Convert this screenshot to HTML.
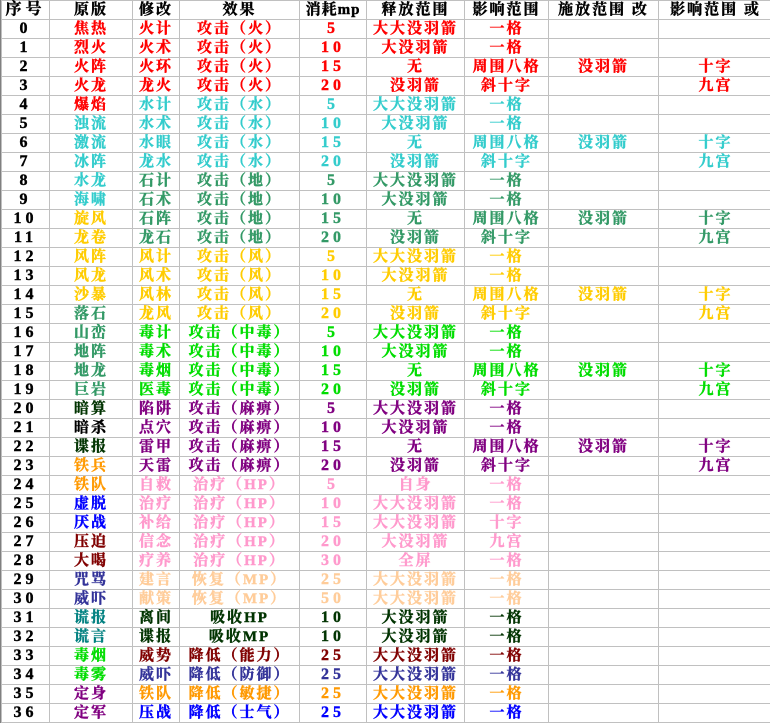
<!DOCTYPE html>
<html><head><meta charset="utf-8"><style>
body{margin:0;background:#fff;width:770px;height:724px;overflow:hidden}
.g{display:grid;grid-template-columns:47px 82px 46px 119px 66px 97px 83px 109px 113px;grid-auto-rows:18px;gap:1px;background:#c0c0c0;padding:1px 0 1px 1px;border-left:1px solid #808080;box-sizing:border-box;width:770px}
.g div{background:#fff;display:flex;align-items:center;justify-content:center;font-family:"Liberation Serif","Noto Serif CJK SC",serif;font-weight:bold;font-size:15px;letter-spacing:2px;white-space:nowrap;line-height:18px;-webkit-text-stroke:0.4px currentColor}
.g div:nth-child(9n+1),.g div:nth-child(9n+5){letter-spacing:4px;font-size:16px}
.k{color:#000}.r{color:#f00}.c{color:#33cccc}.e{color:#339966}.y{color:#ffcc00}.n{color:#00dd00}.p{color:#800080}.i{color:#ff99cc}.h{color:#ffcc99}.d{color:#003300}.m{color:#800000}.s{color:#333399}.o{color:#ff9900}.b{color:#0000ff}.t{color:#008080}
</style></head><body><div class="g">
<div class="k">序号</div><div class="k">原版</div><div class="k">修改</div><div class="k">效果</div><div class="k" style="letter-spacing:1px;font-size:15px">消耗mp</div><div class="k">释放范围</div><div class="k">影响范围</div><div class="k">施放范围 改</div><div class="k">影响范围 或</div>
<div class="k">0</div><div class="r">焦热</div><div class="r">火计</div><div class="r">攻击（火）</div><div class="r">5</div><div class="r">大大没羽箭</div><div class="r">一格</div><div></div><div></div>
<div class="k">1</div><div class="r">烈火</div><div class="r">火术</div><div class="r">攻击（火）</div><div class="r">10</div><div class="r">大没羽箭</div><div class="r">一格</div><div></div><div></div>
<div class="k">2</div><div class="r">火阵</div><div class="r">火环</div><div class="r">攻击（火）</div><div class="r">15</div><div class="r">无</div><div class="r">周围八格</div><div class="r">没羽箭</div><div class="r">十字</div>
<div class="k">3</div><div class="r">火龙</div><div class="r">龙火</div><div class="r">攻击（火）</div><div class="r">20</div><div class="r">没羽箭</div><div class="r">斜十字</div><div></div><div class="r">九宫</div>
<div class="k">4</div><div class="r">爆焰</div><div class="c">水计</div><div class="c">攻击（水）</div><div class="c">5</div><div class="c">大大没羽箭</div><div class="c">一格</div><div></div><div></div>
<div class="k">5</div><div class="c">浊流</div><div class="c">水术</div><div class="c">攻击（水）</div><div class="c">10</div><div class="c">大没羽箭</div><div class="c">一格</div><div></div><div></div>
<div class="k">6</div><div class="c">激流</div><div class="c">水眼</div><div class="c">攻击（水）</div><div class="c">15</div><div class="c">无</div><div class="c">周围八格</div><div class="c">没羽箭</div><div class="c">十字</div>
<div class="k">7</div><div class="c">冰阵</div><div class="c">龙水</div><div class="c">攻击（水）</div><div class="c">20</div><div class="c">没羽箭</div><div class="c">斜十字</div><div></div><div class="c">九宫</div>
<div class="k">8</div><div class="c">水龙</div><div class="e">石计</div><div class="e">攻击（地）</div><div class="e">5</div><div class="e">大大没羽箭</div><div class="e">一格</div><div></div><div></div>
<div class="k">9</div><div class="c">海啸</div><div class="e">石术</div><div class="e">攻击（地）</div><div class="e">10</div><div class="e">大没羽箭</div><div class="e">一格</div><div></div><div></div>
<div class="k">10</div><div class="y">旋风</div><div class="e">石阵</div><div class="e">攻击（地）</div><div class="e">15</div><div class="e">无</div><div class="e">周围八格</div><div class="e">没羽箭</div><div class="e">十字</div>
<div class="k">11</div><div class="y">龙卷</div><div class="e">龙石</div><div class="e">攻击（地）</div><div class="e">20</div><div class="e">没羽箭</div><div class="e">斜十字</div><div></div><div class="e">九宫</div>
<div class="k">12</div><div class="y">风阵</div><div class="y">风计</div><div class="y">攻击（风）</div><div class="y">5</div><div class="y">大大没羽箭</div><div class="y">一格</div><div></div><div></div>
<div class="k">13</div><div class="y">风龙</div><div class="y">风术</div><div class="y">攻击（风）</div><div class="y">10</div><div class="y">大没羽箭</div><div class="y">一格</div><div></div><div></div>
<div class="k">14</div><div class="y">沙暴</div><div class="y">风林</div><div class="y">攻击（风）</div><div class="y">15</div><div class="y">无</div><div class="y">周围八格</div><div class="y">没羽箭</div><div class="y">十字</div>
<div class="k">15</div><div class="e">落石</div><div class="y">龙风</div><div class="y">攻击（风）</div><div class="y">20</div><div class="y">没羽箭</div><div class="y">斜十字</div><div></div><div class="y">九宫</div>
<div class="k">16</div><div class="e">山峦</div><div class="n">毒计</div><div class="n">攻击（中毒）</div><div class="n">5</div><div class="n">大大没羽箭</div><div class="n">一格</div><div></div><div></div>
<div class="k">17</div><div class="e">地阵</div><div class="n">毒术</div><div class="n">攻击（中毒）</div><div class="n">10</div><div class="n">大没羽箭</div><div class="n">一格</div><div></div><div></div>
<div class="k">18</div><div class="e">地龙</div><div class="n">毒烟</div><div class="n">攻击（中毒）</div><div class="n">15</div><div class="n">无</div><div class="n">周围八格</div><div class="n">没羽箭</div><div class="n">十字</div>
<div class="k">19</div><div class="e">巨岩</div><div class="n">医毒</div><div class="n">攻击（中毒）</div><div class="n">20</div><div class="n">没羽箭</div><div class="n">斜十字</div><div></div><div class="n">九宫</div>
<div class="k">20</div><div class="d">暗算</div><div class="p">陷阱</div><div class="p">攻击（麻痹）</div><div class="p">5</div><div class="p">大大没羽箭</div><div class="p">一格</div><div></div><div></div>
<div class="k">21</div><div class="k">暗杀</div><div class="p">点穴</div><div class="p">攻击（麻痹）</div><div class="p">10</div><div class="p">大没羽箭</div><div class="p">一格</div><div></div><div></div>
<div class="k">22</div><div class="d">谍报</div><div class="p">雷甲</div><div class="p">攻击（麻痹）</div><div class="p">15</div><div class="p">无</div><div class="p">周围八格</div><div class="p">没羽箭</div><div class="p">十字</div>
<div class="k">23</div><div class="o">铁兵</div><div class="p">天雷</div><div class="p">攻击（麻痹）</div><div class="p">20</div><div class="p">没羽箭</div><div class="p">斜十字</div><div></div><div class="p">九宫</div>
<div class="k">24</div><div class="o">铁队</div><div class="i">自救</div><div class="i">治疗（HP）</div><div class="i">5</div><div class="i">自身</div><div class="i">一格</div><div></div><div></div>
<div class="k">25</div><div class="b">虚脱</div><div class="i">治疗</div><div class="i">治疗（HP）</div><div class="i">10</div><div class="i">大大没羽箭</div><div class="i">一格</div><div></div><div></div>
<div class="k">26</div><div class="b">厌战</div><div class="i">补给</div><div class="i">治疗（HP）</div><div class="i">15</div><div class="i">大大没羽箭</div><div class="i">十字</div><div></div><div></div>
<div class="k">27</div><div class="m">压迫</div><div class="i">信念</div><div class="i">治疗（HP）</div><div class="i">20</div><div class="i">大没羽箭</div><div class="i">九宫</div><div></div><div></div>
<div class="k">28</div><div class="m">大喝</div><div class="i">疗养</div><div class="i">治疗（HP）</div><div class="i">30</div><div class="i">全屏</div><div class="i">一格</div><div></div><div></div>
<div class="k">29</div><div class="s">咒骂</div><div class="h">建言</div><div class="h">恢复（MP）</div><div class="h">25</div><div class="h">大大没羽箭</div><div class="h">一格</div><div></div><div></div>
<div class="k">30</div><div class="s">威吓</div><div class="h">献策</div><div class="h">恢复（MP）</div><div class="h">50</div><div class="h">大大没羽箭</div><div class="h">一格</div><div></div><div></div>
<div class="k">31</div><div class="t">谎报</div><div class="d">离间</div><div class="d">吸收HP</div><div class="d">10</div><div class="d">大没羽箭</div><div class="d">一格</div><div></div><div></div>
<div class="k">32</div><div class="t">谎言</div><div class="d">谍报</div><div class="d">吸收MP</div><div class="d">10</div><div class="d">大没羽箭</div><div class="d">一格</div><div></div><div></div>
<div class="k">33</div><div class="n">毒烟</div><div class="m">威势</div><div class="m">降低（能力）</div><div class="m">25</div><div class="m">大大没羽箭</div><div class="m">一格</div><div></div><div></div>
<div class="k">34</div><div class="n">毒雾</div><div class="s">威吓</div><div class="s">降低（防御）</div><div class="s">25</div><div class="s">大大没羽箭</div><div class="s">一格</div><div></div><div></div>
<div class="k">35</div><div class="p">定身</div><div class="o">铁队</div><div class="o">降低（敏捷）</div><div class="o">25</div><div class="o">大大没羽箭</div><div class="o">一格</div><div></div><div></div>
<div class="k">36</div><div class="p">定军</div><div class="b">压战</div><div class="b">降低（士气）</div><div class="b">25</div><div class="b">大大没羽箭</div><div class="b">一格</div><div></div><div></div>
</div></body></html>
